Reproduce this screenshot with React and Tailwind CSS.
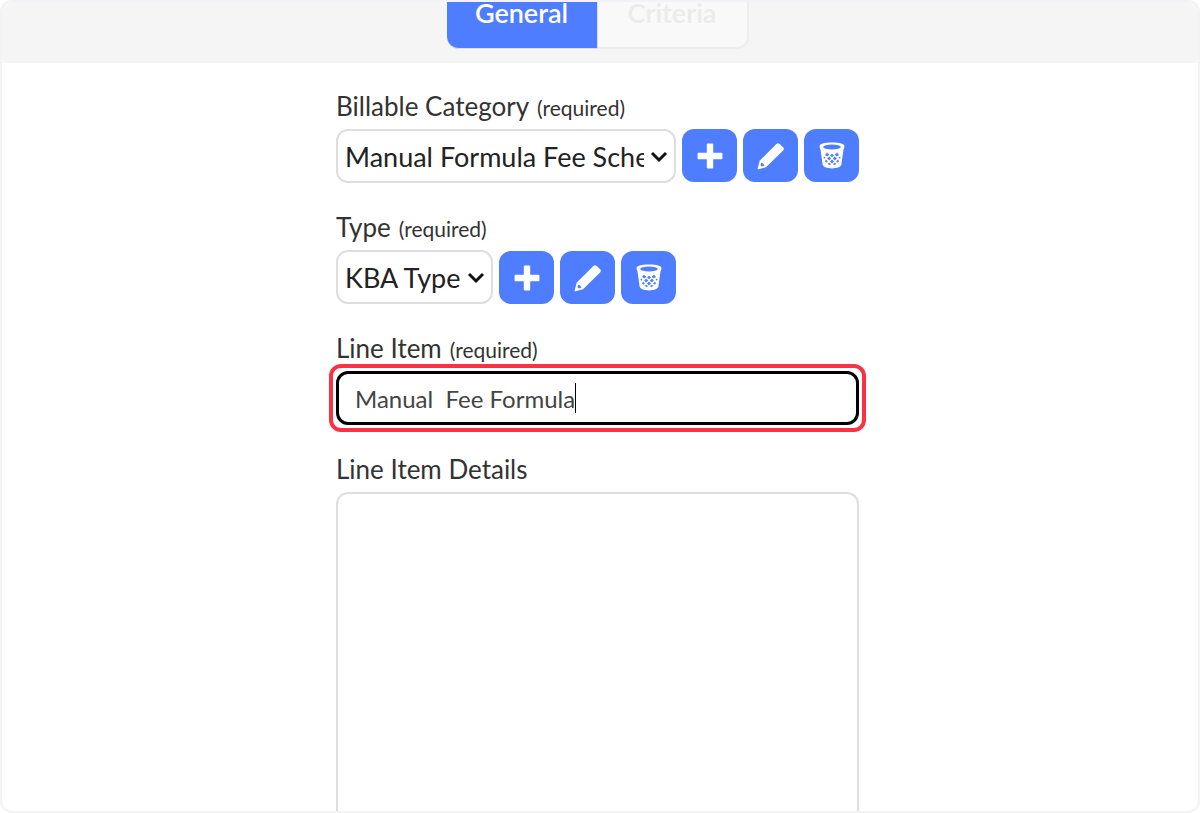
import React, { useState } from "react";

const PlusIcon = () => (
  <svg width="26" height="26" viewBox="0 0 26 26" fill="currentColor" aria-hidden="true">
    <path d="M10.6 0.6h4.8q.8 0 .8.8v8.4h8.4q.8 0 .8.8v4.8q0 .8-.8.8h-8.4v8.4q0 .8-.8.8h-4.8q-.8 0-.8-.8v-8.4H1.4q-.8 0-.8-.8v-4.8q0-.8.8-.8h8.4V1.4q0-.8.8-.8z" />
  </svg>
);

const PencilIcon = () => (
  <svg width="28" height="28" viewBox="0 0 28 28" aria-hidden="true">
    <path
      d="M19.4 1.9q1.6-1.5 3.2 0l3.5 3.4q1.6 1.6 0 3.2L9 25.3 1.4 27.2q-1 .2-.8-.8l2.2-7.8z"
      fill="currentColor"
    />
    <path d="M4.2 20.8q2.400.2 3.200 2.900l-2.600.8-1.300-1.200z" fill="#4f7dff" />
  </svg>
);

const TrashIcon = () => (
  <svg width="26" height="27" viewBox="0 0 26 27" aria-hidden="true">
    <path
      d="M0.6 4.2C0.6 1.8 5 .6 13 .6s12.4 1.2 12.4 3.6c0 1.2-.5 2.3-.9 3L22.400 22.600c-.4 2.400-4 3.800-9.400 3.800s-9-1.400-9.400-3.800L1.500 7.200c-.4-.7-.9-1.800-.9-3z"
      fill="currentColor"
    />
    <ellipse cx="13" cy="5" rx="8.800" ry="2.400" fill="#4f7dff" />
    <g fill="#4f7dff">
      <path d="M7.800 10.800l2.600 1.700-2 2-2.400-1.600z" />
      <path d="M18.200 10.800l-2.600 1.700 2 2 2.400-1.600z" />
      <path d="M13 11.800l2 1.700-2 1.800-2-1.800z" />
      <circle cx="5.400" cy="15.600" r="0.900" />
      <circle cx="20.600" cy="15.600" r="0.900" />
      <path d="M10.200 14.600l2 2-2 2-2-2z" />
      <path d="M15.800 14.600l2 2-2 2-2-2z" />
      <path d="M7 17.600l1.900 1.900-1.500 1.300-1.400-1.400z" />
      <path d="M19 17.600l-1.900 1.900 1.500 1.300 1.400-1.400z" />
      <path d="M13 17.600l2 2-2 2-2-2z" />
      <path d="M10.200 20.400l1.800 1.800-1.500.8-1.900-.9z" />
      <path d="M15.800 20.400l-1.800 1.800 1.500.8 1.900-.9z" />
    </g>
  </svg>
);

const IconButton = ({ label, children }) => (
  <button
    type="button"
    aria-label={label}
    className="flex h-[53px] w-[55px] shrink-0 items-center justify-center rounded-xl bg-[#4f7dff] text-white"
  >
    {children}
  </button>
);

const FieldLabel = ({ htmlFor, required, children }) => (
  <label htmlFor={htmlFor} className="mb-2 block text-[26px] leading-[30px] text-[#333333]">
    {children}
    {required && <span className="ml-2 text-[21px] leading-none">(required)</span>}
  </label>
);

const SelectField = ({ id, label, options, width, align }) => (
  <div className="mb-[29px]">
    <FieldLabel htmlFor={id} required>
      {label}
    </FieldLabel>
    <div className={`flex gap-1.5 ${align}`}>
      <div className={`relative ${width}`}>
        <select
          id={id}
          className="h-[54px] w-full appearance-none rounded-xl border-2 border-[#dedede] bg-white pt-0.5 pr-[30px] pl-[7px] text-[27px] text-[#222222]"
        >
          {options.map((option) => (
            <option key={option}>{option}</option>
          ))}
        </select>
        <svg
          width="18"
          height="12"
          viewBox="0 0 18 12"
          className="pointer-events-none absolute top-[22px] right-2"
          aria-hidden="true"
        >
          <path d="M2 2l7 7 7-7" fill="none" stroke="#111111" strokeWidth="3" />
        </svg>
      </div>
      <IconButton label={`Add ${label}`}>
        <PlusIcon />
      </IconButton>
      <IconButton label={`Edit ${label}`}>
        <PencilIcon />
      </IconButton>
      <IconButton label={`Delete ${label}`}>
        <TrashIcon />
      </IconButton>
    </div>
  </div>
);

const App = () => {
  const [lineItem, setLineItem] = useState("Manual  Fee Formula");
  const [details, setDetails] = useState("");

  return (
    <div className="flex h-screen flex-col overflow-hidden rounded-xl border-2 border-[#f2f2f7] bg-white font-['Lato','Liberation_Sans',sans-serif]">
      <div className="flex shrink-0 justify-center bg-[#f5f5f5] pr-[5px] pb-[14px]">
        <button
          type="button"
          className="h-[47px] w-[151px] rounded-bl-xl border-r border-b border-[#dedede] bg-[#4f7dff] pb-6 text-[27px] leading-[22px] font-semibold text-white"
        >
          General
        </button>
        <button
          type="button"
          disabled
          className="h-[47px] w-[151px] rounded-br-xl border-r-2 border-b-2 border-[#eeeeee] bg-[#f9f9f9] pb-6 text-[27px] leading-[22px] font-semibold text-[#ebebeb]"
        >
          Criteria
        </button>
      </div>

      <div className="min-h-0 flex-1 overflow-hidden pr-[5px]">
        <form className="mx-auto flex h-full max-w-[523px] flex-col pt-7">
          <SelectField
            id="category"
            label="Billable Category"
            options={["Manual Formula Fee Schedule"]}
            width="min-w-0 flex-1"
            align="items-start"
          />
          <SelectField
            id="type"
            label="Type"
            options={["KBA Type"]}
            width="w-[157px]"
            align="items-end"
          />

          <div className="mb-[29px]">
            <FieldLabel htmlFor="lineItem" required>
              Line Item
            </FieldLabel>
            <div className="relative">
              <input
                id="lineItem"
                type="text"
                value={lineItem}
                onChange={(e) => setLineItem(e.target.value)}
                className="block h-[54px] w-full rounded-xl border-3 border-black bg-white px-4 text-[24px] text-[#444444] outline-none"
              />
              {/* caret */}
              <span className="pointer-events-none absolute top-3 left-[239px] h-[30px] w-px bg-black" />
              {/* highlight ring */}
              <span className="pointer-events-none absolute -inset-[7px] rounded-xl border-4 border-[#fa3246]" />
            </div>
          </div>

          <FieldLabel htmlFor="details">Line Item Details</FieldLabel>
          <textarea
            id="details"
            value={details}
            onChange={(e) => setDetails(e.target.value)}
            className="min-h-0 w-full flex-1 resize-none rounded-t-xl border-2 border-b-0 border-[#dedede] bg-white p-4 text-[24px] text-[#444444] outline-none"
          />
        </form>
      </div>
    </div>
  );
};

export default App;
